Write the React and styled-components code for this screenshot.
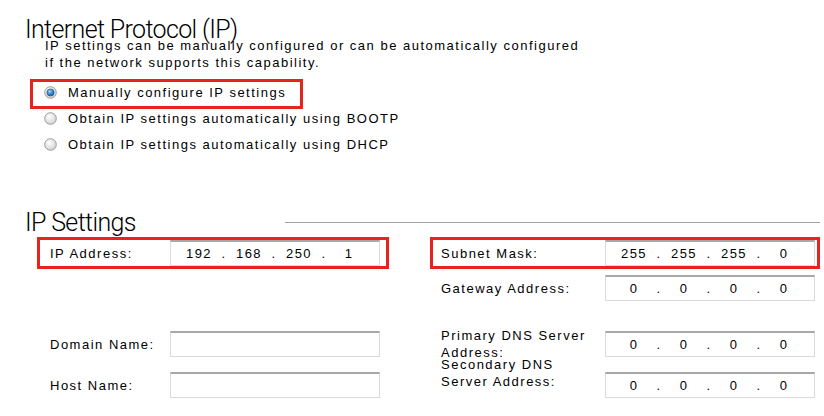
import React from 'react';
import styled, { createGlobalStyle } from 'styled-components';

const GlobalStyle = createGlobalStyle`
  html, body {
    margin: 0;
    padding: 0;
    background: #fff;
  }
  body {
    font-family: "Liberation Sans", Arial, sans-serif;
    color: #000;
  }
`;

const RED = '#e6231f';

const Page = styled.div`
  width: 824px;
  height: 416px;
  overflow: hidden;
  background: #fff;
  padding: 20px 4px 0 25px;
  box-sizing: border-box;
`;

const Heading = styled.h1`
  margin: 0;
  font-family: Roboto, "Liberation Sans", sans-serif;
  font-weight: 300;
  font-size: 25px;
  line-height: 20px;
  letter-spacing: -0.65px;
  color: #000;
`;

const Description = styled.p`
  margin: -3px 0 0 20px;
  font-size: 13px;
  line-height: 17px;
  letter-spacing: 1.5px;
`;

const RadioList = styled.div`
  display: flex;
  flex-direction: column;
  margin: 8px 0 0 5px;
`;

const RadioRow = styled.label`
  display: flex;
  align-items: center;
  gap: 11px;
  width: ${p => (p.$highlight ? '256px' : 'auto')};
  height: 21px;
  padding: 0 0 3px 11px;
  margin-top: -4px;
  border: 3px solid ${p => (p.$highlight ? RED : 'transparent')};
  font-size: 13px;
  letter-spacing: 1.5px;
  &:first-child {
    margin-top: 0;
  }
`;

const RadioMark = ({ checked }) => (
  <svg width="13" height="13" viewBox="0 0 13 13">
    <defs>
      <radialGradient id="rOff" cx="0.4" cy="0.35" r="0.7">
        <stop offset="0" stopColor="#ffffff" />
        <stop offset="1" stopColor="#cfcfcf" />
      </radialGradient>
      <radialGradient id="rOn" cx="0.4" cy="0.35" r="0.7">
        <stop offset="0" stopColor="#9fd6ff" />
        <stop offset="0.6" stopColor="#2b82cc" />
        <stop offset="1" stopColor="#154f8a" />
      </radialGradient>
    </defs>
    <circle cx="6.5" cy="6.5" r="5.8" fill="url(#rOff)" stroke="#9c9c9c" strokeWidth="1" />
    {checked && <circle cx="6.5" cy="6.5" r="3.6" fill="url(#rOn)" stroke="#1d4f7c" strokeWidth="0.6" />}
  </svg>
);

const SettingsHead = styled.div`
  display: flex;
  align-items: center;
  margin-top: 52px;
`;

const Rule = styled.div`
  margin-left: auto;
  width: 535px;
  height: 1px;
  background: #a3a3a3;
  margin-top: -1px;
`;

const FieldGrid = styled.div`
  display: grid;
  grid-template-columns: 352px 390px;
  grid-template-rows: 35px 56px 41px 32px;
  column-gap: 41px;
  align-items: start;
  margin: 4px 0 0 12px;
`;

const FieldRow = styled.div`
  display: flex;
  align-items: center;
  height: 26px;
  padding-left: ${p => p.$pad}px;
  border: 3px solid ${p => (p.$highlight ? RED : 'transparent')};
`;

const Label = styled.span`
  flex: 1;
  font-size: 13px;
  line-height: 17px;
  letter-spacing: 1.5px;
  margin-top: ${p => p.$shift || 0}px;
`;

const Box = styled.div`
  display: flex;
  align-items: center;
  width: 210px;
  height: 26px;
  box-sizing: border-box;
  margin-right: ${p => p.$right}px;
  background: #fff;
  border: 1px solid #dadada;
  border-top: 2px solid #a8a8a8;
  padding-left: 10px;
  font-size: 13px;
  letter-spacing: 1.4px;
`;

const Segment = styled.span`
  width: 36px;
  text-align: center;
`;

const Dot = styled.span`
  width: 14px;
  text-align: center;
`;

const IpBox = ({ value, right }) => {
  const parts = value.split('.');
  return (
    <Box $right={right}>
      {parts.map((p, i) => (
        <React.Fragment key={i}>
          {i > 0 && <Dot>.</Dot>}
          <Segment>{p}</Segment>
        </React.Fragment>
      ))}
    </Box>
  );
};

const Field = ({ label, value, side, highlight, shift }) => {
  const left = side === 'left';
  return (
    <FieldRow $highlight={highlight} $pad={left ? 10 : 8}>
      <Label $shift={shift}>{label}</Label>
      {value !== undefined ? (
        <IpBox value={value} right={left ? 6 : 2} />
      ) : (
        <Box $right={left ? 6 : 2} />
      )}
    </FieldRow>
  );
};

export default function App() {
  return (
    <Page>
      <GlobalStyle />
      <Heading>Internet Protocol (IP)</Heading>
      <Description>
        IP settings can be manually configured or can be automatically configured
        <br />
        if the network supports this capability.
      </Description>

      <RadioList>
        <RadioRow $highlight>
          <RadioMark checked />
          Manually configure IP settings
        </RadioRow>
        <RadioRow>
          <RadioMark />
          Obtain IP settings automatically using BOOTP
        </RadioRow>
        <RadioRow>
          <RadioMark />
          Obtain IP settings automatically using DHCP
        </RadioRow>
      </RadioList>

      <SettingsHead>
        <Heading>IP Settings</Heading>
        <Rule />
      </SettingsHead>

      <FieldGrid>
        <Field side="left" label="IP Address:" value="192.168.250.1" highlight />
        <Field side="right" label="Subnet Mask:" value="255.255.255.0" highlight />
        <div />
        <Field side="right" label="Gateway Address:" value="0.0.0.0" />
        <Field side="left" label="Domain Name:" />
        <Field
          side="right"
          label={<>Primary DNS Server<br />Address:</>}
          value="0.0.0.0"
        />
        <Field side="left" label="Host Name:" />
        <Field
          side="right"
          label={<>Secondary DNS<br />Server Address:</>}
          value="0.0.0.0"
          shift={-24}
        />
      </FieldGrid>
    </Page>
  );
}
